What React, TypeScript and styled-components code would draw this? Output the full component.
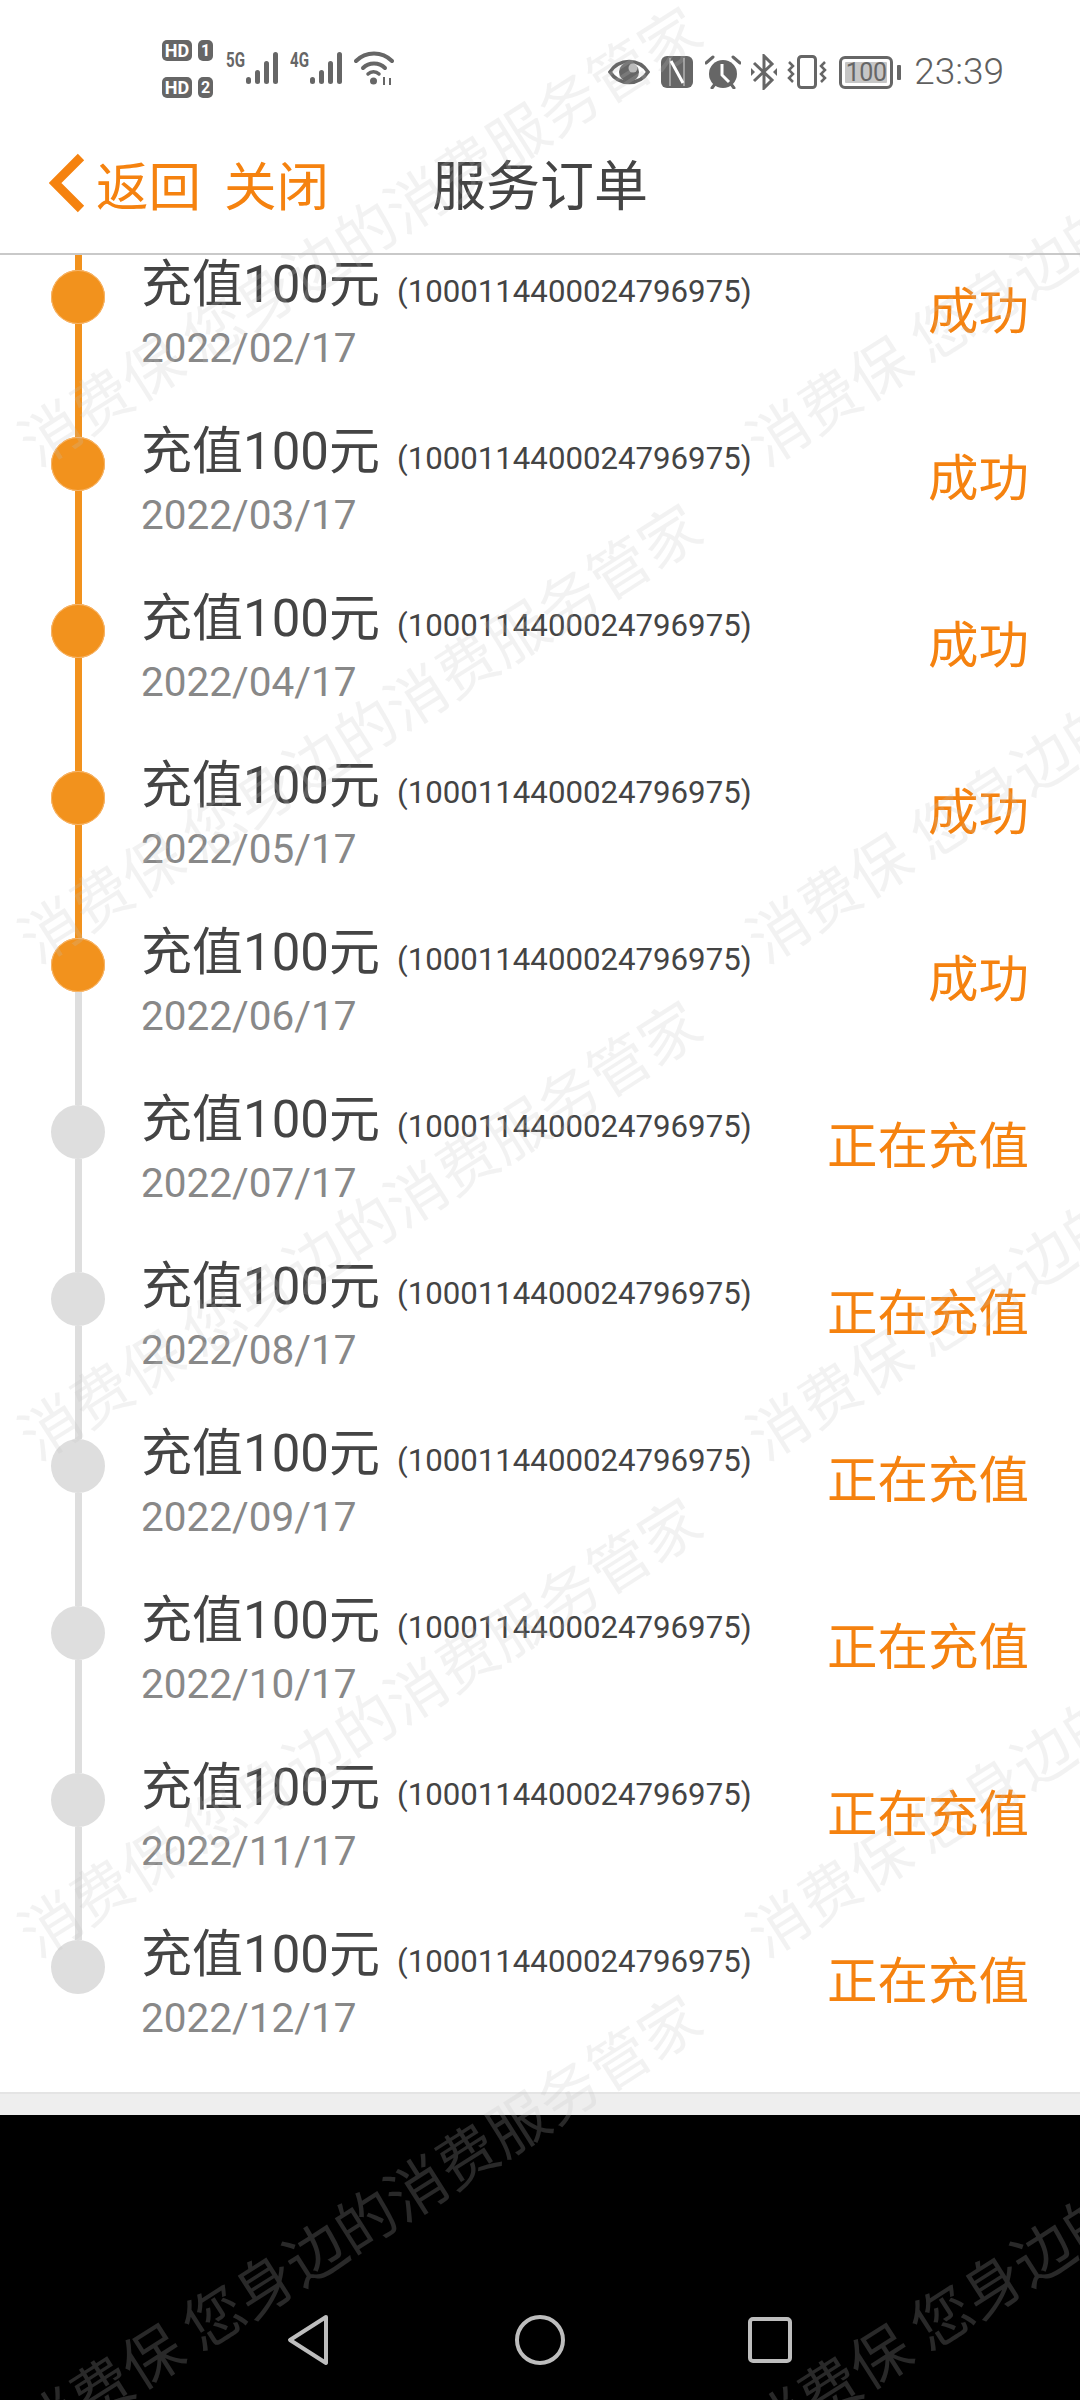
import React from 'react';
import styled, { createGlobalStyle } from 'styled-components';

const ORANGE = '#f5820f';
const DOT_ON = '#f2921d';
const DOT_OFF = '#dedede';
const STATUS_GREY = '#666666';

const GlobalStyle = createGlobalStyle`
  html, body {
    margin: 0;
    padding: 0;
    background: #000;
  }

  body {
    font-family: Roboto, "Noto Sans CJK SC", sans-serif;
  }
`;

const Page = styled.div`
  position: relative;
  width: 1080px;
  height: 2400px;
  overflow: hidden;
  display: flex;
  flex-direction: column;
  background: #fff;
`;

const StatusBar = styled.div`
  height: 122px;
  flex: none;
  display: flex;
  justify-content: space-between;
  align-items: flex-start;
  padding: 40px 76px 0 162px;
  box-sizing: border-box;
  color: ${STATUS_GREY};
`;

const StatusLeft = styled.div`
  display: flex;
  align-items: flex-start;
`;

const StatusRight = styled.div`
  display: flex;
  align-items: center;
  height: 46px;
  margin-top: 9px;
`;

const SimColumn = styled.div`
  display: flex;
  flex-direction: column;
  gap: 16px;
  margin-right: 13px;
`;

const SimRow = styled.div`
  display: flex;
  gap: 6px;
`;

const SimPill = styled.span`
  width: 30px;
  height: 21px;
  border-radius: 5px;
  background: ${STATUS_GREY};
  color: #fff;
  font: 700 18px/21px Roboto, sans-serif;
  text-align: center;
`;

const SimNumber = styled(SimPill)`
  width: 15px;
  font-size: 16px;
`;

const Signal = styled.div`
  position: relative;
  width: 52px;
  height: 32px;
  margin: 12px 12px 0 0;
  display: flex;
  justify-content: flex-end;
  align-items: flex-end;
  gap: 4px;
`;

const NetLabel = styled.span`
  position: absolute;
  left: 0;
  top: -2px;
  font: 700 21px/21px Roboto, sans-serif;
  transform: scaleX(0.72);
  transform-origin: left top;
`;

const SignalBar = styled.span<{ $h: number }>`
  width: 5px;
  height: ${(p) => p.$h}px;
  border-radius: 2.5px;
  background: ${STATUS_GREY};
`;

const WifiSlot = styled.span`
  display: flex;
  margin-top: 10px;
`;

const IconSlot = styled.span<{ $w: number; $gap: number }>`
  display: flex;
  width: ${(p) => p.$w}px;
  margin-right: ${(p) => p.$gap}px;
`;

const Battery = styled.div`
  width: 54px;
  height: 33px;
  box-sizing: border-box;
  border: 3px solid ${STATUS_GREY};
  border-radius: 6px;
  padding: 3px;
  display: flex;
`;

const BatteryFill = styled.div`
  flex: 1;
  background: #c6c6c6;
  border-radius: 1px;
  font: 400 25px/21px Roboto, sans-serif;
  text-align: center;
  letter-spacing: -0.5px;
  color: ${STATUS_GREY};
`;

const BatteryNub = styled.span`
  width: 4px;
  height: 15px;
  margin: 0 13px 0 4px;
  border-radius: 1px;
  background: ${STATUS_GREY};
`;

const Clock = styled.span`
  font: 300 37px/46px Roboto, sans-serif;
  color: #5f5f5f;
`;

const Header = styled.header`
  height: 133px;
  flex: none;
  box-sizing: border-box;
  border-bottom: 2px solid #c9c9c9;
  display: flex;
  align-items: flex-start;
  padding: 31px 0 0 49px;
`;

const BackLink = styled.a`
  display: flex;
  align-items: center;
  height: 60px;
  color: ${ORANGE};
  font: 400 52.5px/60px "Noto Sans CJK SC", sans-serif;
`;

const BackChevron = styled.svg`
  width: 36px;
  height: 60px;
  margin-right: 11px;
`;

const CloseLink = styled(BackLink)`
  margin-left: 23px;
`;

const Title = styled.h1`
  margin: 0 0 0 103px;
  font: 400 54px/60px "Noto Sans CJK SC", sans-serif;
  color: #444;
`;

const List = styled.main`
  flex: 1;
  min-height: 0;
  overflow: hidden;
`;

const ListInner = styled.div`
  margin-top: -25px;
`;

const Row = styled.div`
  height: 167px;
  display: flex;
  padding: 0 51px 0 51px;
`;

const Rail = styled.div`
  width: 54px;
  height: 167px;
  flex: none;
  display: flex;
  flex-direction: column;
  align-items: center;
  margin-right: 36px;
`;

const RailLine = styled.span<{ $on: boolean; $h: number }>`
  width: 7px;
  height: ${(p) => p.$h}px;
  flex: none;
  background: ${(p) => (p.$on ? DOT_ON : DOT_OFF)};
`;

const Dot = styled.span<{ $on: boolean }>`
  width: 54px;
  height: 54px;
  flex: none;
  border-radius: 50%;
  background: ${(p) => (p.$on ? DOT_ON : DOT_OFF)};
  box-shadow: ${(p) => (p.$on ? 'inset 0 0 0 1px #f7b56a' : 'none')};
`;

const RowBody = styled.div`
  flex: 1;
  padding-top: 25px;
`;

const RowTitle = styled.div`
  display: flex;
  align-items: baseline;
  height: 60px;
  font: 400 51px/60px Roboto, "Noto Sans CJK SC", sans-serif;
  color: #444;
`;

const OrderCode = styled.span`
  margin-left: 17px;
  font: 400 31.2px/40px Roboto, "Noto Sans CJK SC", sans-serif;
  color: #444;
`;

const RowDate = styled.div`
  margin-top: 8px;
  font: 400 40.5px/50px Roboto, sans-serif;
  color: #888;
`;

const RowState = styled.div`
  margin-top: 47px;
  font: 400 50.5px/60px "Noto Sans CJK SC", sans-serif;
  color: ${ORANGE};
`;

const Footer = styled.div`
  height: 23px;
  flex: none;
  box-sizing: border-box;
  border-top: 2px solid #e4e4e4;
  background: #eeeeee;
`;

const NavBar = styled.nav`
  height: 285px;
  flex: none;
  box-sizing: border-box;
  background: #000;
  display: flex;
  align-items: flex-start;
  padding: 198px 0 0 284px;
  gap: 178px;
`;

const NavIcon = styled.svg`
  width: 52px;
  height: 54px;
`;

const Watermarks = styled.div`
  position: absolute;
  inset: 0;
  pointer-events: none;
`;

const Watermark = styled.span<{ $x: number; $y: number }>`
  position: absolute;
  left: ${(p) => p.$x}px;
  top: ${(p) => p.$y}px;
  transform: translate(-50%, -50%) rotate(-32.5deg);
  white-space: nowrap;
  font: 400 60px/70px "Noto Sans CJK SC", sans-serif;
  color: rgba(193, 193, 193, 0.21);
`;

type Order = { date: string; done: boolean };

const ORDERS: Order[] = [
  { date: '2022/02/17', done: true },
  { date: '2022/03/17', done: true },
  { date: '2022/04/17', done: true },
  { date: '2022/05/17', done: true },
  { date: '2022/06/17', done: true },
  { date: '2022/07/17', done: false },
  { date: '2022/08/17', done: false },
  { date: '2022/09/17', done: false },
  { date: '2022/10/17', done: false },
  { date: '2022/11/17', done: false },
  { date: '2022/12/17', done: false },
];

const MARK_POINTS: [number, number][] = [];
for (let k = 0; k < 5; k++) {
  MARK_POINTS.push([358, 2221 - 497 * k]);
  MARK_POINTS.push([1086, 2221 - 497 * k]);
}

const SignalBars = ({ label }: { label: string }) => (
  <Signal>
    <NetLabel>{label}</NetLabel>
    <SignalBar $h={7} />
    <SignalBar $h={14} />
    <SignalBar $h={23} />
    <SignalBar $h={32} />
  </Signal>
);

const WifiIcon = () => (
  <svg width="40" height="36" viewBox="0 0 40 36" fill="none" stroke={STATUS_GREY} strokeWidth="4" strokeLinecap="round">
    <path d="M2 11C12 1 28 1 38 11" />
    <path d="M9 18C15 12 25 12 31 18" />
    <path d="M14 24C17 21 22 21 25 24" strokeWidth="3.5" />
    <circle cx="19.5" cy="31" r="3.5" fill={STATUS_GREY} stroke="none" />
    <path d="M30 27v8M36 28v7" strokeWidth="2" strokeLinecap="butt" />
  </svg>
);

const EyeIcon = () => (
  <svg width="42" height="28" viewBox="0 0 42 28">
    <path d="M2 14C11 0 31 0 40 14C31 28 11 28 2 14Z" fill="none" stroke={STATUS_GREY} strokeWidth="3.5" />
    <circle cx="21" cy="14" r="10" fill={STATUS_GREY} />
    <circle cx="25" cy="10" r="4.5" fill="#fff" opacity="0.55" />
  </svg>
);

const NfcIcon = () => (
  <svg width="32" height="32" viewBox="0 0 32 32">
    <rect width="32" height="32" rx="6" fill={STATUS_GREY} />
    <path d="M9 2V30M23 2V30" stroke="#fff" strokeWidth="1.5" opacity="0.5" />
    <path d="M10 5L22 27" fill="none" stroke="#fff" strokeWidth="3" />
  </svg>
);

const AlarmIcon = () => (
  <svg width="36" height="34" viewBox="0 0 36 34">
    <circle cx="18" cy="19" r="14" fill={STATUS_GREY} />
    <path d="M1 8L8 2M35 8L28 2M7 33l3-4M29 33l-3-4" stroke={STATUS_GREY} strokeWidth="3" strokeLinecap="round" />
    <path d="M17 9v11l7 7" fill="none" stroke="#fff" strokeWidth="3" />
  </svg>
);

const BluetoothIcon = () => (
  <svg width="26" height="36" viewBox="0 0 26 36" fill="none" stroke={STATUS_GREY} strokeWidth="3">
    <path d="M3 9L21 26L13 34V2L21 10L3 27" />
    <path d="M0 14l4 4-4 4zM26 14l-4 4 4 4z" fill={STATUS_GREY} stroke="none" />
  </svg>
);

const VibrateIcon = () => (
  <svg width="40" height="34" viewBox="0 0 40 34" fill="none" stroke={STATUS_GREY}>
    <rect x="11.5" y="1.5" width="17" height="31" rx="3" strokeWidth="3" />
    <path d="M2 7l4 4-4 4 4 4-4 4 4 4M38 7l-4 4 4 4-4 4 4 4-4 4" strokeWidth="2.5" />
  </svg>
);

const App = (): JSX.Element => (
  <Page>
    <GlobalStyle />
    <StatusBar>
      <StatusLeft>
        <SimColumn>
          <SimRow>
            <SimPill>HD</SimPill>
            <SimNumber>1</SimNumber>
          </SimRow>
          <SimRow>
            <SimPill>HD</SimPill>
            <SimNumber>2</SimNumber>
          </SimRow>
        </SimColumn>
        <SignalBars label="5G" />
        <SignalBars label="4G" />
        <WifiSlot>
          <WifiIcon />
        </WifiSlot>
      </StatusLeft>
      <StatusRight>
        <IconSlot $w={42} $gap={11}>
          <EyeIcon />
        </IconSlot>
        <IconSlot $w={32} $gap={12}>
          <NfcIcon />
        </IconSlot>
        <IconSlot $w={36} $gap={10}>
          <AlarmIcon />
        </IconSlot>
        <IconSlot $w={26} $gap={10}>
          <BluetoothIcon />
        </IconSlot>
        <IconSlot $w={40} $gap={12}>
          <VibrateIcon />
        </IconSlot>
        <Battery>
          <BatteryFill>100</BatteryFill>
        </Battery>
        <BatteryNub />
        <Clock>23:39</Clock>
      </StatusRight>
    </StatusBar>

    <Header>
      <BackLink>
        <BackChevron viewBox="0 0 36 60">
          <path d="M32 4L6 30L32 56" fill="none" stroke={ORANGE} strokeWidth="9" />
        </BackChevron>
        返回
      </BackLink>
      <CloseLink>关闭</CloseLink>
      <Title>服务订单</Title>
    </Header>

    <List>
      <ListInner>
        {ORDERS.map((order, i) => (
          <Row key={order.date}>
            <Rail>
              <RailLine $on={order.done} $h={40} />
              <Dot $on={order.done} />
              {i + 1 < ORDERS.length && <RailLine $on={ORDERS[i + 1].done} $h={73} />}
            </Rail>
            <RowBody>
              <RowTitle>
                充值100元
                <OrderCode>(1000114400024796975)</OrderCode>
              </RowTitle>
              <RowDate>{order.date}</RowDate>
            </RowBody>
            <RowState>{order.done ? '成功' : '正在充值'}</RowState>
          </Row>
        ))}
      </ListInner>
    </List>

    <Footer />

    <NavBar>
      <NavIcon viewBox="0 0 52 54">
        <path d="M42 4L6 27L42 50Z" fill="none" stroke="#bdbdbd" strokeWidth="4" strokeLinejoin="round" />
      </NavIcon>
      <NavIcon viewBox="0 0 52 54">
        <circle cx="26" cy="27" r="23" fill="none" stroke="#bdbdbd" strokeWidth="4" />
      </NavIcon>
      <NavIcon viewBox="0 0 52 54">
        <rect x="6" y="6" width="40" height="42" rx="3" fill="none" stroke="#bdbdbd" strokeWidth="4" />
      </NavIcon>
    </NavBar>

    <Watermarks>
      {MARK_POINTS.map(([x, y]) => (
        <Watermark key={`${x}-${y}`} $x={x} $y={y}>
          消费保 您身边的消费服务管家
        </Watermark>
      ))}
    </Watermarks>
  </Page>
);

export default App;
